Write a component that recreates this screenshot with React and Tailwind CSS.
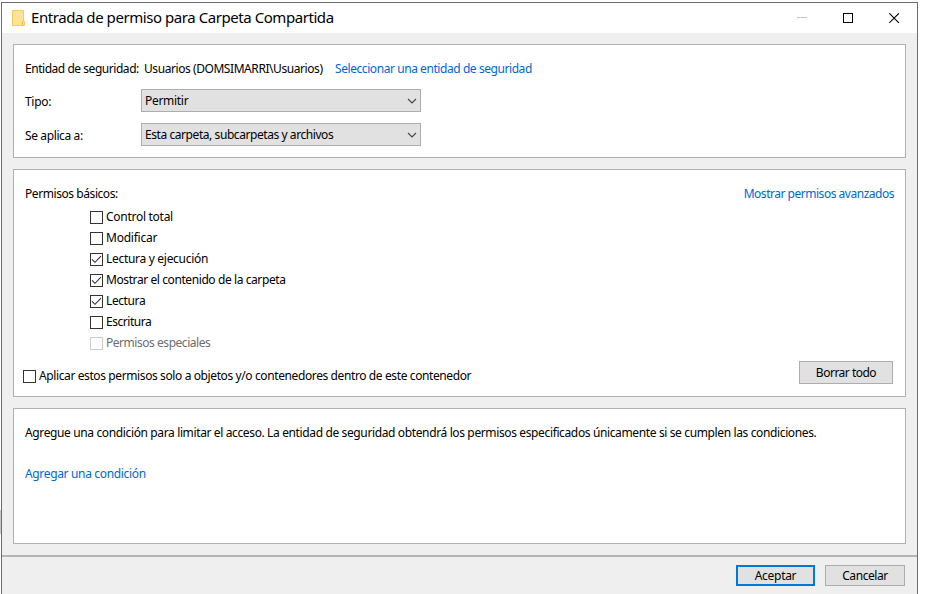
import React from "react";

const permissions = [
  { label: "Control total", tracking: "tracking-[-0.28px]" },
  { label: "Modificar", tracking: "tracking-[-0.24px]" },
  { label: "Lectura y ejecución", checked: true, tracking: "tracking-[-0.3px]" },
  { label: "Mostrar el contenido de la carpeta", checked: true, tracking: "tracking-[-0.41px]" },
  { label: "Lectura", checked: true, tracking: "tracking-[-0.4px]" },
  { label: "Escritura", tracking: "tracking-[-0.45px]" },
  { label: "Permisos especiales", disabled: true, tracking: "tracking-[-0.46px]" },
];

function CheckBox({ checked, disabled }) {
  return (
    <span className={`block size-[13px] shrink-0 border bg-white ${disabled ? "border-[#cccccc]" : "border-[#333333]"}`}>
      {checked && (
        <svg className="block size-[11px]" viewBox="0 0 11 11" fill="none" stroke="#333" strokeWidth="1.1">
          <path d="M1 5.3 4 8.3 10 2.2" />
        </svg>
      )}
    </span>
  );
}

function Combo({ children }) {
  return (
    <div className="flex h-[23px] w-[280px] items-center justify-between border border-[#adadad] bg-[#e1e1e1] pr-[3px] pl-[3px]">
      <span>{children}</span>
      <svg className="size-[10px]" viewBox="0 0 10 10" fill="none" stroke="#444" strokeWidth="1.1">
        <path d="M1 3 5 7 9 3" />
      </svg>
    </div>
  );
}

function Panel({ className, children }) {
  return <section className={`mx-[11px] border border-[#b0b0b0] bg-white px-[11px] ${className}`}>{children}</section>;
}

export default function App() {
  return (
    <div className="flex h-[594px] w-[925px] overflow-hidden bg-white pt-[2px] font-['Noto_Sans','Open_Sans',sans-serif] text-[12px] leading-4 tracking-[-0.43px] whitespace-nowrap text-black">
      <div className="mt-[508px] h-6 w-px shrink-0 bg-[#c8c8c8]" />
      <main className="flex h-[592px] w-[917px] shrink-0 flex-col border border-b-0 border-[#6d6d6d] bg-[#efefef]">
        <header className="flex h-[30px] shrink-0 items-center bg-white pl-[9px]">
          <svg className="h-[17px] w-[15px]" viewBox="0 0 15 17">
            <path d="M1.5.5h11v10l1 1v4h-12z" fill="#ffe391" stroke="#f1cc60" />
            <path d="M11.5 15.5v-4l1.5-1" fill="none" stroke="#e9bd47" />
          </svg>
          <h1 className="ml-[5px] -mt-[2px] text-[15px] leading-5 tracking-[-0.44px]">Entrada de permiso para Carpeta Compartida</h1>
          <div className="mr-[17px] ml-auto flex items-center gap-[35px]">
            <svg className="h-[11px] w-[11px]" viewBox="0 0 11 11" shapeRendering="crispEdges"><path d="M0 4.5h10" stroke="#c6c6c6" /></svg>
            <svg className="h-[11px] w-[11px]" viewBox="0 0 11 11" shapeRendering="crispEdges"><path d="M.5.5h9v9h-9z" fill="none" stroke="#000" /></svg>
            <svg className="h-[11px] w-[11px]" viewBox="0 0 11 11"><path d="M.3.3 9.9 9.9M9.9.3.3 9.9" stroke="#000" strokeWidth="1.1" /></svg>
          </div>
        </header>

        <Panel className="mt-[11px] h-[114px] shrink-0 pt-4">
          <div className="flex">
            <span className="w-[119px] tracking-[-0.46px]">Entidad de seguridad:</span>
            <span className="w-[191px]">Usuarios (DOMSIMARRI\Usuarios)</span>
            <a className="text-[#0066d2]">Seleccionar una entidad de seguridad</a>
          </div>
          <div className="mt-3 flex items-center">
            <span className="w-[116px] pt-[2px] tracking-[-0.3px]">Tipo:</span>
            <Combo><span className="tracking-[-0.3px]">Permitir</span></Combo>
          </div>
          <div className="mt-[11px] flex items-center">
            <span className="w-[116px] pt-[2px] tracking-[-0.38px]">Se aplica a:</span>
            <Combo>Esta carpeta, subcarpetas y archivos</Combo>
          </div>
        </Panel>

        <Panel className="mt-[11px] h-[228px] shrink-0 pt-4">
          <div className="flex justify-between">
            <span>Permisos básicos:</span>
            <a className="tracking-[-0.48px] text-[#0066d2]">Mostrar permisos avanzados</a>
          </div>
          <div className="mt-[5px] ml-[65px]">
            {permissions.map((p) => (
              <div key={p.label} className={`flex h-[21px] items-center gap-[3px] ${p.tracking} ${p.disabled ? "text-[#6d6d6d]" : ""}`}>
                <CheckBox checked={p.checked} disabled={p.disabled} />
                <span className="pb-[2px]">{p.label}</span>
              </div>
            ))}
          </div>
          <div className="mt-[7px] -ml-[2px] flex justify-between">
            <div className="flex items-center gap-[3px] pt-[7px]">
              <CheckBox />
              <span className="tracking-[-0.39px]">Aplicar estos permisos solo a objetos y/o contenedores dentro de este contenedor</span>
            </div>
            <button className="mr-px h-[23px] w-[94px] border border-[#adadad] bg-[#e1e1e1] tracking-[-0.5px]">Borrar todo</button>
          </div>
        </Panel>

        <Panel className="mt-[11px] h-[136px] shrink-0 pt-4">
          <p className="tracking-[-0.37px]">Agregue una condición para limitar el acceso. La entidad de seguridad obtendrá los permisos especificados únicamente si se cumplen las condiciones.</p>
          <a className="mt-[25px] block tracking-[-0.34px] text-[#0066d2]">Agregar una condición</a>
        </Panel>

        <footer className="mt-[11px] flex flex-1 items-start justify-end gap-[10px] border-t-2 border-[#b4b4b4] pt-2 pr-3">
          <button className="h-[21px] w-[79px] border-2 border-[#0078d7] bg-[#e1e1e1] leading-none tracking-[-0.3px]">Aceptar</button>
          <button className="h-[21px] w-[80px] border border-[#adadad] bg-[#e1e1e1] leading-none">Cancelar</button>
        </footer>
      </main>
    </div>
  );
}
